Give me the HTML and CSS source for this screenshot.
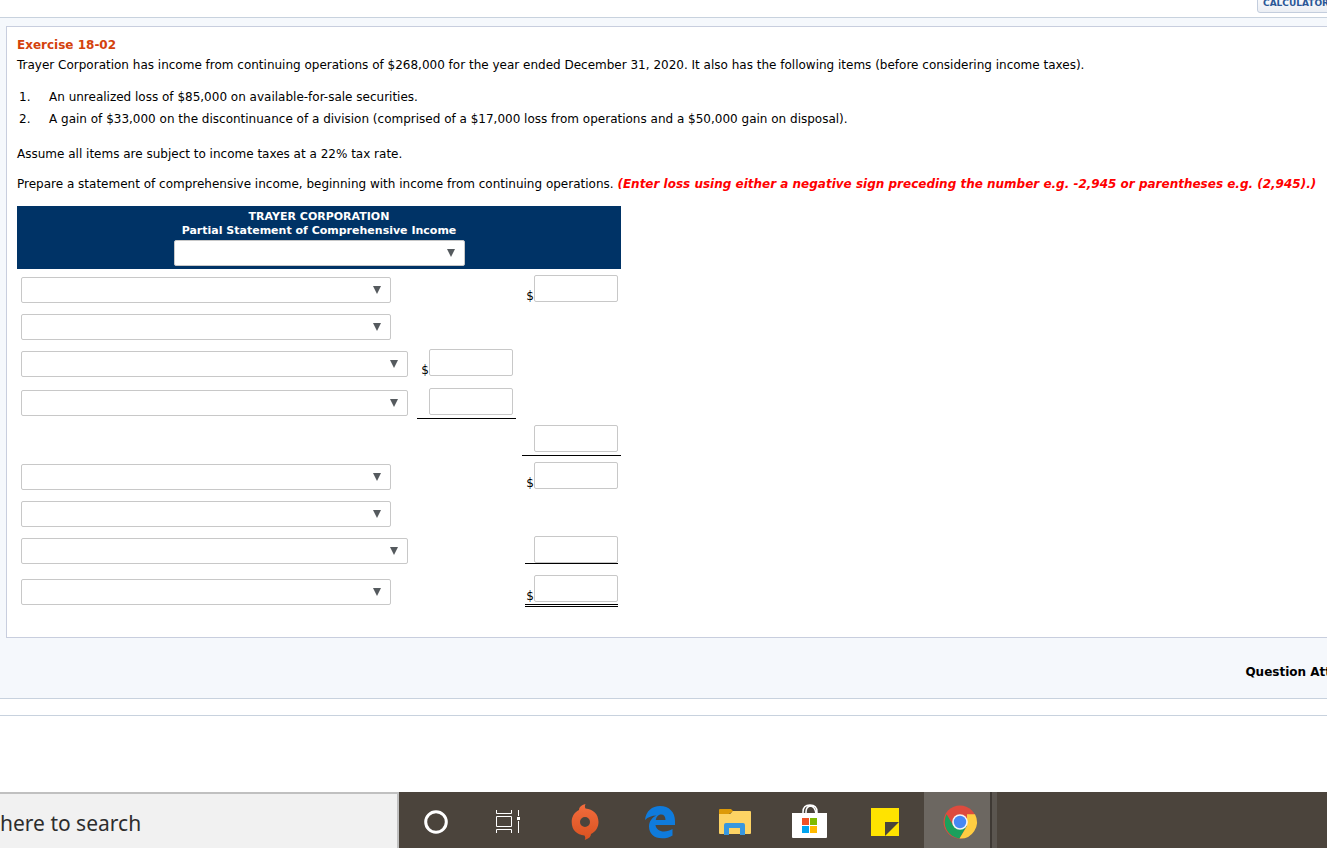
FILE: index.html
```html
<!DOCTYPE html>
<html lang="en">
<head>
<meta charset="utf-8">
<title>Exercise 18-02</title>
<link rel="stylesheet" href="styles.css">
</head>
<body>
<header class="tools"><button class="tool-button" type="button">CALCULATOR</button></header>
<main class="question">
  <section class="panel">
    <h1 class="title">Exercise 18-02</h1>
    <p class="intro">Trayer Corporation has income from continuing operations of $268,000 for the year ended December 31, 2020. It also has the following items (before considering income taxes).</p>
    <ol class="items">
      <li><span class="num">1.</span><span>An unrealized loss of $85,000 on available-for-sale securities.</span></li>
      <li><span class="num">2.</span><span>A gain of $33,000 on the discontinuance of a division (comprised of a $17,000 loss from operations and a $50,000 gain on disposal).</span></li>
    </ol>
    <p class="assume">Assume all items are subject to income taxes at a 22% tax rate.</p>
    <p class="task">Prepare a statement of comprehensive income, beginning with income from continuing operations. <em class="hint">(Enter loss using either a negative sign preceding the number e.g. -2,945 or parentheses e.g. (2,945).)</em></p>
    <table class="statement">
      <colgroup><col class="col-label"><col class="col-amount"><col class="col-amount"></colgroup>
      <thead>
        <tr><th colspan="3">TRAYER CORPORATION<br>Partial Statement of Comprehensive Income
          <span class="picker period"><select aria-label="Statement period"></select></span></th></tr>
      </thead>
      <tbody>
        <tr><td class="label"><span class="picker"><select aria-label="Line 1"></select></span></td><td></td><td><div class="amount">$<input type="text" aria-label="Line 1 amount"></div></td></tr>
        <tr><td class="label"><span class="picker"><select aria-label="Line 2"></select></span></td><td></td><td></td></tr>
        <tr class="tall"><td class="label"><span class="picker wide"><select aria-label="Line 3"></select></span></td><td><div class="amount">$<input type="text" aria-label="Line 3 amount"></div></td><td></td></tr>
        <tr><td class="label"><span class="picker wide"><select aria-label="Line 4"></select></span></td><td><div class="amount ruled"><input type="text" aria-label="Line 4 amount"></div></td><td></td></tr>
        <tr><td class="label"></td><td></td><td><div class="amount ruled"><input type="text" aria-label="Subtotal"></div></td></tr>
        <tr><td class="label"><span class="picker"><select aria-label="Line 6"></select></span></td><td></td><td><div class="amount">$<input type="text" aria-label="Line 6 amount"></div></td></tr>
        <tr><td class="label"><span class="picker"><select aria-label="Line 7"></select></span></td><td></td><td></td></tr>
        <tr class="tall"><td class="label"><span class="picker wide"><select aria-label="Line 8"></select></span></td><td></td><td><div class="amount"><span class="underline"><input type="text" aria-label="Line 8 amount"></span></div></td></tr>
        <tr class="total"><td class="label"><span class="picker"><select aria-label="Line 9"></select></span></td><td></td><td><div class="amount"><span class="underline double">$<input type="text" aria-label="Total amount"></span></div></td></tr>
      </tbody>
    </table>
  </section>
  <p class="attempts">Question Att</p>
</main>
<div class="divider"></div>
<footer class="taskbar">
  <input class="search" type="text" placeholder="here to search" aria-label="Type here to search">
  <nav class="apps" aria-label="Taskbar">
    <button class="app" type="button" aria-label="Cortana"><svg viewBox="0 0 75 56"><circle cx="37" cy="30" r="10.3" fill="none" stroke="#fff" stroke-width="3"/></svg></button>
    <button class="app" type="button" aria-label="Task View"><svg viewBox="0 0 75 56"><g fill="none" stroke="#fff"><path d="M22.5 18v3.5h15V18M22.5 41v-3.5h15V41M22.5 24.500h15v10h-15zM44.500 18v6M44.500 29v12"/></g><path fill="#fff" d="M43 25h3v3h-3z"/></svg></button>
    <button class="app" type="button" aria-label="Origin"><svg viewBox="0 0 75 56"><defs><linearGradient id="origin" x2="0" y2="1"><stop stop-color="#f36c3d"/><stop offset="1" stop-color="#d95220"/></linearGradient></defs><path fill="url(#origin)" fill-rule="evenodd" d="M36.500 12C32 13 30 15.500 30 18C25 20.500 22.700 25 22.700 30C22.700 38 28 43 35.500 43.500C36.500 45 36.500 46.500 35.700 48C40 46.500 42 44.500 42 42C47 39.500 49.500 35 49.500 30C49.500 22 44 17 36.500 16.500C35.700 15 35.700 13.500 36.500 12ZM36 25a5 5 0 1 0 0 10a5 5 0 1 0 0-10Z"/></svg></button>
    <button class="app" type="button" aria-label="Edge"><svg viewBox="0 0 75 56"><path fill="#0f7bdc" d="M21 28C22 19 28 14 36 14C45 14 51 20 51 29V33H31.500C32 37 35.500 39.500 40 39.500C43 39.500 46 38.500 48.500 37V43.500C45.500 45.500 42 46.300 38 46.300C30 46.300 25 41.500 25 34.500C25 29.500 28 25.500 32.500 23.500C28 23.500 24 25 21 28ZM31.800 28H41.500C41.500 24.500 40 22.500 37.200 22.500C34 22.500 32.200 25 31.800 28Z"/></svg></button>
    <button class="app" type="button" aria-label="File Explorer"><svg viewBox="0 0 75 56"><path fill="#dd9a08" d="M20 18q0-1 1-1h11l3 3h-2l-3 2H20z"/><path fill="#fdd364" d="M20 22h11l3-3h17q1 0 1 1v21q0 1-1 1H21q-1 0-1-1z"/><path fill="#3797df" d="M25 43V33q0-2 2-2h17q2 0 2 2v10h-5v-7H30v7z"/></svg></button>
    <button class="app" type="button" aria-label="Store"><svg viewBox="0 0 75 56"><path fill="none" stroke="#fff" stroke-width="1.500" d="M29 22v-2q0-7 7-7t7 7v2M32 22v-2q0-5 4-6q5 0 6 8"/><path fill="#fff" d="M18 21h35v24q0 1-1 1H19q-1 0-1-1z"/><path fill="#f05125" d="M28 26h7v7h-7z"/><path fill="#7fba00" d="M36 26h7v7h-7z"/><path fill="#00a4ef" d="M28 34h7v7h-7z"/><path fill="#ffb900" d="M36 34h7v7h-7z"/></svg></button>
    <button class="app" type="button" aria-label="Sticky Notes"><svg viewBox="0 0 75 56"><path fill="#ffe300" d="M22 16h28v28H22z"/><path fill="#4a443b" d="M36 30h14L36 44z"/></svg></button>
    <button class="app active" type="button" aria-label="Chrome"><svg viewBox="0 0 75 56"><circle cx="36" cy="30" r="16.500" fill="#dd4b3e"/><path fill="#1ba05c" d="M22.600 22.300A16.500 16.500 0 0 0 35.500 46.500L43 34L36 30L29.500 34Z"/><path fill="#ffcd42" d="M51 22.300A16.500 16.500 0 0 1 35.500 46.500L43 34L43 22.300Z"/><circle cx="36" cy="30" r="7.800" fill="#f5f5f5"/><circle cx="36" cy="30" r="6.200" fill="#4688f4"/></svg></button>
  </nav>
</footer>
</body>
</html>
```
FILE: styles.css
```css
* { box-sizing: border-box; }

body {
  margin: 0;
  min-height: 100vh;
  display: flex;
  flex-direction: column;
  overflow: hidden;
  background: #fff;
  color: #000;
  font: 12px/16px Verdana, "DejaVu Sans", sans-serif;
}

h1, p, ol { margin: 0; padding: 0; }

.tools {
  display: flex;
  align-items: flex-end;
  justify-content: flex-end;
  height: 17px;
  padding-bottom: 4px;
  overflow: hidden;
}

.tool-button {
  flex: none;
  height: 21px;
  margin-right: -8px;
  padding: 0 5px;
  border: 1px solid #c3cddd;
  border-radius: 3px;
  background: linear-gradient(#fff, #ebeef4);
  color: #2b5797;
  font: bold 9px/16px Verdana, "DejaVu Sans", sans-serif;
}

.question {
  padding: 8px 0 0 6px;
  border: solid #c8d2de;
  border-width: 1px 0;
  background: #f5f8fc;
}

.panel {
  padding: 10px 0 30px 10px;
  border: 1px solid #c8cede;
  border-right: 0;
  background: #fff;
  white-space: nowrap;
}

.title {
  color: #d4420c;
  font-size: 12px;
  line-height: 16px;
}

.intro { padding: 4px 0 16px; }

.items { list-style: none; }

.items li {
  display: flex;
  padding: 0 2px 6px;
}

.num { width: 30px; }

.assume { padding: 13px 0 14px; }

.task { padding-bottom: 14px; }

.hint {
  color: #f00;
  font-weight: bold;
}

.statement {
  width: 604px;
  border-collapse: collapse;
  table-layout: fixed;
}

.col-label { width: 394px; }

.col-amount { width: 105px; }

.statement th {
  padding: 4px 0 3px;
  background: #036;
  color: #fff;
  font-size: 11px;
  line-height: 14px;
}

.statement td {
  height: 37px;
  padding: 0;
  vertical-align: top;
}

.statement .label { padding: 8px 0 0 4px; }

.statement .tall td { height: 39px; }

.statement .total .label { padding-top: 10px; }

.picker {
  display: block;
  position: relative;
  width: 370px;
  height: 26px;
}

.picker.wide { width: 387px; }

.picker.period {
  width: 291px;
  margin: 2px auto 0;
}

.picker::after {
  content: "";
  position: absolute;
  top: 9px;
  right: 10px;
  border: solid transparent;
  border-width: 8px 4px 0;
  border-top-color: #555a5e;
  pointer-events: none;
}

.picker select {
  display: block;
  width: 100%;
  height: 100%;
  appearance: none;
  border: 1px solid #c8c8c8;
  border-radius: 2px;
  background: #fff;
}

.amount {
  display: flex;
  align-items: flex-end;
  justify-content: flex-end;
  margin-left: 6px;
  padding: 6px 3px 0 0;
  line-height: 12px;
}

.amount input {
  width: 84px;
  height: 27px;
  padding: 0 4px;
  border: 1px solid #c8c8c8;
  border-radius: 2px;
  font: inherit;
}

.ruled {
  padding-bottom: 3px;
  border-bottom: 1px solid #000;
}

.underline {
  display: flex;
  flex: 1;
  align-items: flex-end;
  justify-content: flex-end;
  margin-left: 3px;
  border-bottom: 1px solid #000;
}

.underline.double {
  padding-bottom: 2px;
  border-bottom: 3px double #000;
}

.attempts {
  margin-right: -4px;
  padding: 26px 0 18px;
  font-weight: bold;
  text-align: right;
}

.divider {
  flex: 1;
  margin-top: 16px;
  border-top: 1px solid #c8d2de;
}

.taskbar {
  display: flex;
  height: 56px;
  background: #4b443c;
}

.search {
  width: 399px;
  padding: 4px 0 0;
  border: solid #c0c0c0;
  border-width: 2px 2px 0 0;
  border-radius: 0;
  background: #f1f1f1;
  font: 21px "Segoe UI", "Noto Sans", sans-serif;
}

.search::placeholder { color: #2d2d2d; }

.apps { display: flex; }

.app {
  width: 75px;
  padding: 0;
  border: 0;
  background: none;
}

.app svg { display: block; width: 75px; height: 56px; }

.active {
  background: linear-gradient(90deg, #6c6761 66px, #3e3934 66px 68px, #5b5650 68px 73px, transparent 73px);
}
```
